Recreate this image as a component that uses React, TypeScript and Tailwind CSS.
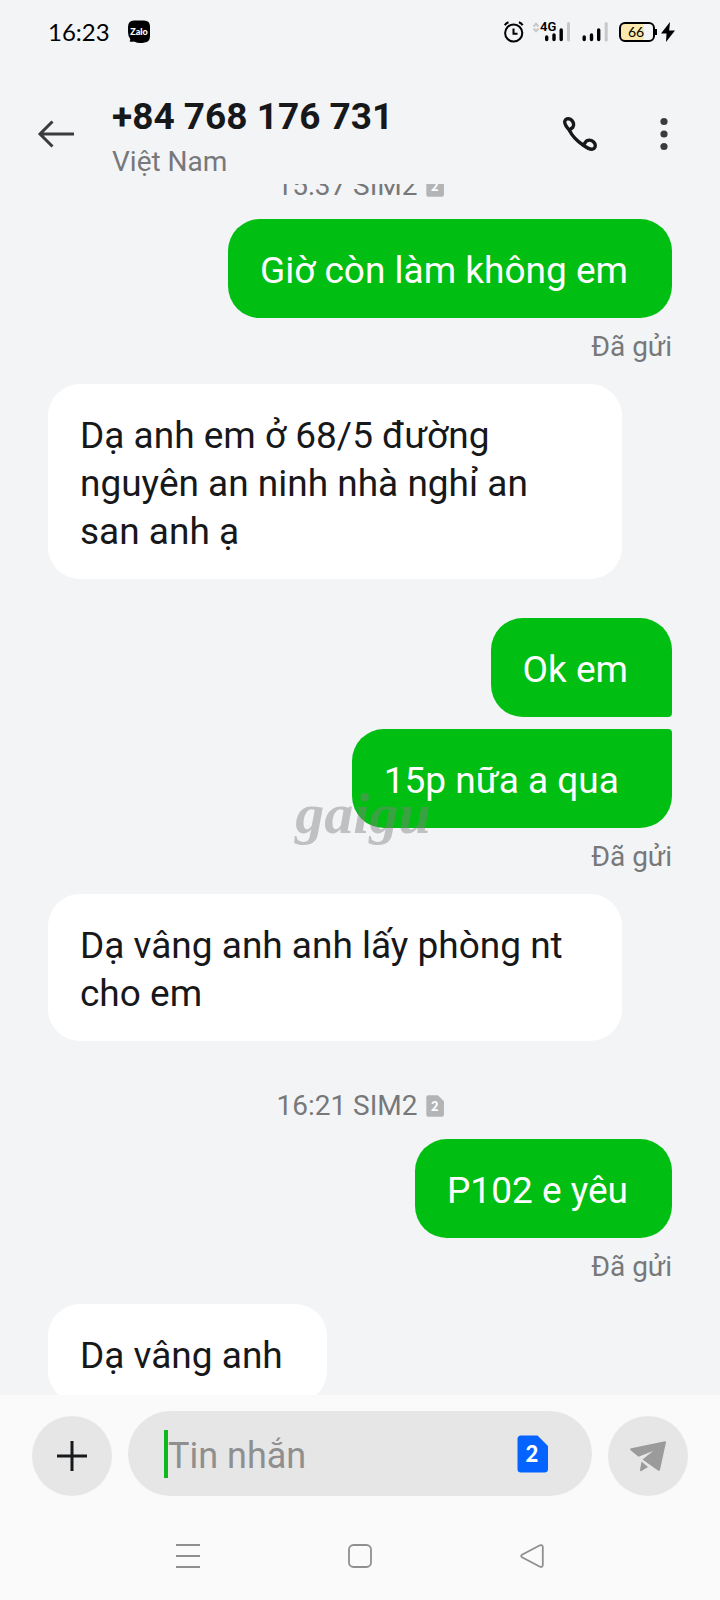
import { useState } from "react";

type Bubble = {
    kind: "bubble";
    text: string;
    mine: boolean;
    // how the bubble joins its neighbour from the same sender
    joined?: "top" | "bottom";
    gap: string;
    width?: string;
};

type Item =
    | Bubble
    | { kind: "stamp"; time: string; sim: number; gap: string }
    | { kind: "status"; text: string };

const items: Item[] = [
    { kind: "stamp", time: "15:37", sim: 2, gap: "-mt-[13px]" },
    { kind: "bubble", text: "Giờ còn làm không em", mine: true, gap: "mt-[18px]" },
    { kind: "status", text: "Đã gửi" },
    {
        kind: "bubble",
        text: "Dạ anh em ở 68/5 đường nguyên an ninh nhà nghỉ an san anh ạ",
        mine: false,
        gap: "mt-5",
        width: "w-[574px]",
    },
    { kind: "bubble", text: "Ok em", mine: true, joined: "bottom", gap: "mt-[39px]" },
    { kind: "bubble", text: "15p nữa a qua\u00a0", mine: true, joined: "top", gap: "mt-3" },
    { kind: "status", text: "Đã gửi" },
    {
        kind: "bubble",
        text: "Dạ vâng anh anh lấy phòng nt cho em",
        mine: false,
        gap: "mt-5",
        width: "w-[574px]",
    },
    { kind: "stamp", time: "16:21", sim: 2, gap: "mt-[50px]" },
    { kind: "bubble", text: "P102 e yêu", mine: true, gap: "mt-[18px]" },
    { kind: "status", text: "Đã gửi" },
    { kind: "bubble", text: "Dạ vâng anh", mine: false, gap: "mt-5" },
];

function SimIcon({ slot, className }: { slot: number; className: string }) {
    return (
        <svg className={className} viewBox="0 0 31 38">
            <path d="M4 0.5H20.5L31 11V34Q31 37.5 27.5 37.5H4Q0.5 37.5 0.5 34V4Q0.5 0.5 4 0.5Z" fill="currentColor" />
            <text x="15" y="27" textAnchor="middle" fontSize="22" fontWeight="900" fill="#fff" fontFamily="Lato, sans-serif">
                {slot}
            </text>
        </svg>
    );
}

function StatusBar() {
    return (
        <div className="flex h-16 shrink-0 items-center justify-between pl-12 pr-11 text-black">
            <div className="flex items-center gap-[18px]">
                <span className="font-['Lato',sans-serif] text-2xl leading-8">16:23</span>
                <svg className="h-6 w-[22px]" viewBox="0 0 22 24">
                    <path d="M6 0.5H16Q22 0.5 22 6.5V16Q22 22 16.5 22.5Q11 24 6 21.5Q4 22.3 1.5 21.3Q2.8 20 2 18.5Q0 16 0 12V7Q0 0.5 6 0.5Z" />
                    <text x="11" y="14.5" textAnchor="middle" fontSize="9" fontWeight="900" fill="#fff" fontFamily="Lato, sans-serif">
                        Zalo
                    </text>
                </svg>
            </div>
            <div className="flex items-center">
                <svg className="h-[22px] w-5" viewBox="0 0 20 22" fill="none" stroke="currentColor" strokeWidth="2">
                    <circle cx="9.7" cy="12" r="8.6" />
                    <path d="M9.5 7.5V12.8H13.5" />
                    <path d="M0.8 4.2Q2 1.9 4.500 1.2M18.600 4.200Q17.4 1.9 14.9 1.2" />
                </svg>
                <svg className="ml-2 h-[22px] w-[40px]" viewBox="0 0 40 22">
                    <path d="M1.5 5.5L4 2.8L6.5 5.5M1.5 7.5L4 10.2L6.5 7.5" fill="none" stroke="#c6c7c9" strokeWidth="2" />
                    <text x="8" y="10" fontSize="13" fontWeight="600" fontFamily="Roboto, sans-serif">
                        4G
                    </text>
                    <path d="M14.7 16V18.5M22 14V18.5M29.2 9V18.5" stroke="currentColor" strokeWidth="3.4" strokeLinecap="round" />
                    <path d="M36.5 2.5V19" stroke="#c6c7c9" strokeWidth="3" strokeLinecap="round" />
                </svg>
                <svg className="ml-2.5 h-[22px] w-[26px]" viewBox="0 0 26 22">
                    <path d="M2.2 16V18.5M9.5 14V18.5M16.7 9V18.5" stroke="currentColor" strokeWidth="3.4" strokeLinecap="round" />
                    <path d="M24.2 2.5V19" stroke="#c6c7c9" strokeWidth="3" strokeLinecap="round" />
                </svg>
                <svg className="ml-2.5 h-[22px] w-[58px]" viewBox="0 0 58 22">
                    <rect x="3" y="3" width="23" height="16" rx="3" fill="#fae8ac" />
                    <rect x="2" y="2" width="34" height="18" rx="5" fill="none" stroke="currentColor" strokeWidth="2" />
                    <path d="M37 8h2v6h-2z" />
                    <text x="18" y="16" textAnchor="middle" fontSize="14" fontFamily="Lato, sans-serif">
                        66
                    </text>
                    <path d="M52 1L43 12.5H48.5L48 21L57 9.5H51.200Z" />
                </svg>
            </div>
        </div>
    );
}

function Header() {
    return (
        <header className="mt-5 flex h-[100px] shrink-0 items-center pl-9 pr-12">
            <button type="button" aria-label="Back" className="text-[#3a3b3d]">
                <svg className="h-10 w-10" viewBox="0 0 40 40" fill="none" stroke="currentColor" strokeWidth="3">
                    <path d="M38 20H4.5M16.5 7.500L4 20L16.500 32.5" />
                </svg>
            </button>
            <div className="ml-9 min-w-0 flex-1 self-end">
                <h1 className="text-[37px] leading-[46px] font-bold text-[#17181a]">+84 768 176 731</h1>
                <p className="text-[28px] leading-11 text-[#77787a]">Việt Nam</p>
            </div>
            <button type="button" aria-label="Call" className="text-[#17181a]">
                <svg className="h-9 w-9" viewBox="0 0 36 36" fill="none" stroke="currentColor" strokeWidth="3.4" strokeLinejoin="round">
                    <path d="M7.5 14.5C4.500 11 2.300 8 2.700 5.500C3.200 2.800 6 2 8.500 3.300C11.300 5 12.500 8.500 11 11C10 12.500 8 12.800 7.500 14.500Z" />
                    <path d="M7.5 14.5C10.500 20.500 15 25 21 29" />
                    <path d="M21 29C24.500 31.500 27.500 33.500 30.300 33.200C33 32.700 34 30 32.800 27.500C31.300 24.800 28 23.400 25.200 24.600C23.300 25.600 23 27.800 21 29Z" />
                </svg>
            </button>
            <button type="button" aria-label="More options" className="ml-[58px] text-[#3a3b3d]">
                <svg className="h-9 w-4" viewBox="0 0 16 36" fill="currentColor">
                    <circle cx="8" cy="5.5" r="3.6" />
                    <circle cx="8" cy="18" r="3.6" />
                    <circle cx="8" cy="30.5" r="3.6" />
                </svg>
            </button>
        </header>
    );
}

function Message({ item }: { item: Item }) {
    if (item.kind === "stamp") {
        return (
            <div className={`flex shrink-0 items-center justify-center gap-2 text-[28px] leading-[30px] text-[#77787a] ${item.gap}`}>
                <span>
                    {item.time} SIM{item.sim}
                </span>
                <SimIcon slot={item.sim} className="h-[22px] w-[18px] text-[#b3b4b6]" />
            </div>
        );
    }

    if (item.kind === "status") {
        return <p className="mt-3 shrink-0 text-right text-[28px] leading-[34px] text-[#77787a]">{item.text}</p>;
    }

    const corner = item.joined === "top" ? "rounded-tr" : item.joined === "bottom" ? "rounded-br" : "";
    const tone = item.mine ? "self-end bg-[#00be12] text-white" : "self-start bg-white text-[#17181a]";
    return (
        <div
            className={`max-w-[92%] shrink-0 rounded-[32px] pt-7 pr-11 pb-[23px] pl-8 text-[37px] leading-12 ${tone} ${corner} ${item.gap} ${item.width ?? ""}`}
        >
            {item.text}
        </div>
    );
}

function Composer() {
    const [draft, setDraft] = useState("");

    return (
        <form className="flex items-end gap-4 px-8 pt-4" onSubmit={(e) => e.preventDefault()}>
            <button
                type="button"
                aria-label="Add attachment"
                className="flex size-20 shrink-0 items-center justify-center rounded-full bg-[#e6e6e6] text-[#17181a]"
            >
                <svg className="size-8" viewBox="0 0 32 32" stroke="currentColor" strokeWidth="3">
                    <path d="M16 1V31M1 16H31" />
                </svg>
            </button>
            <div className="flex h-[85px] min-w-0 flex-1 items-center rounded-full bg-[#e6e6e6] pl-9 pr-11">
                <span className="h-12 w-1 shrink-0 bg-[#10b820]" />
                <input
                    type="text"
                    aria-label="Tin nhắn"
                    placeholder="Tin nhắn"
                    value={draft}
                    onChange={(e) => setDraft(e.target.value)}
                    className="min-w-0 flex-1 bg-transparent pt-1 text-4xl leading-12 text-[#17181a] outline-none placeholder:text-[#8f8f8f]"
                />
                <button type="button" aria-label="SIM 2" className="shrink-0 text-[#0564ff]">
                    <SimIcon slot={2} className="h-[38px] w-[31px]" />
                </button>
            </div>
            <button
                type="submit"
                aria-label="Send"
                className="flex size-20 shrink-0 items-center justify-center rounded-full bg-[#e6e6e6] text-[#9b9b9b]"
            >
                <svg className="size-9" viewBox="0 -3 36 36" fill="currentColor">
                    <path d="M0.3 9Q-0.500 7.600 1.200 7.200L35 0.200Q36.200 0 36 1.200L30 28.800Q29.500 30.500 28 29.500L12.500 18.500L23 10L8.5 15.800Z" />
                    <path d="M11.500 20.500L18 26L11.500 30Q9.800 30.600 10 29Z" />
                </svg>
            </button>
        </form>
    );
}

function NavBar() {
    return (
        <nav className="grid h-[104px] grid-cols-3 items-center justify-items-center px-[102px] pt-4 text-[#8f8f8f]">
            <button type="button" aria-label="Recent apps">
                <svg className="size-6" viewBox="0 0 24 24" stroke="currentColor" strokeWidth="2">
                    <path d="M0 1H24M0 12H24M0 23H24" />
                </svg>
            </button>
            <button type="button" aria-label="Home">
                <svg className="size-6" viewBox="0 0 24 24" fill="none" stroke="currentColor" strokeWidth="1.8">
                    <rect x="1" y="1" width="22" height="22" rx="4.5" />
                </svg>
            </button>
            <button type="button" aria-label="Back">
                <svg className="size-6" viewBox="0 0 24 24" fill="none" stroke="currentColor" strokeWidth="1.8">
                    <path d="M20 1.3L2 10.7Q0.4 12 2 13.3L20 22.7Q22.6 23.500 22.8 21V3Q22.6 0.500 20 1.3Z" />
                </svg>
            </button>
        </nav>
    );
}

export default function App() {
    return (
        <div className="relative flex h-screen flex-col overflow-hidden bg-[#f3f4f6] font-['Roboto','Noto_Sans',sans-serif]">
            <StatusBar />
            <Header />

            <main className="flex min-h-0 flex-1 flex-col overflow-hidden px-12">
                {items.map((item, i) => (
                    <Message key={i} item={item} />
                ))}
            </main>

            <footer className="shrink-0 bg-[#fafafa]">
                <Composer />
                <NavBar />
            </footer>

            {/* Watermark */}
            <span className="pointer-events-none absolute inset-x-0 top-1/2 pl-1.5 text-center font-['Liberation_Serif',serif] text-[58px] leading-7 font-bold text-[#808080]/45 italic">
                gaigu
            </span>
        </div>
    );
}
